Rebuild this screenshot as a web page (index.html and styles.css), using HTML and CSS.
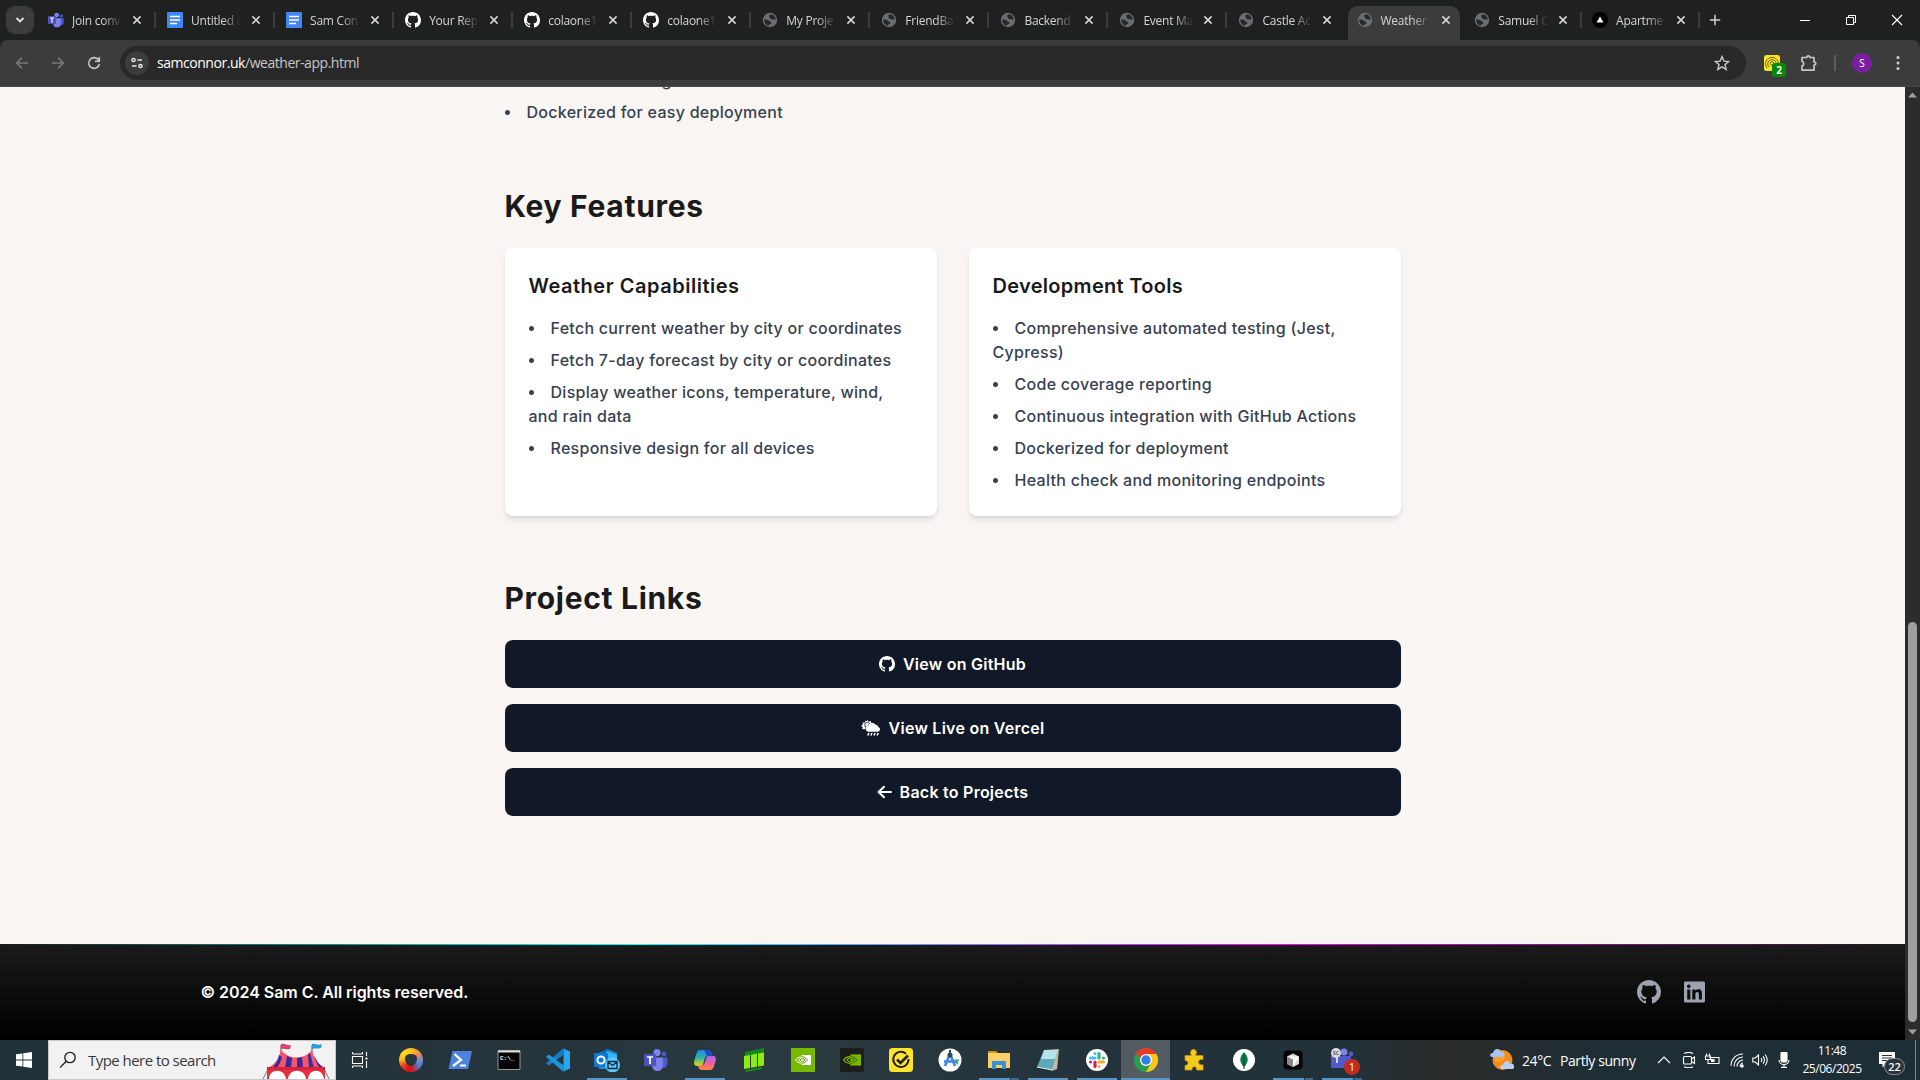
FILE: index.html
```html
<!DOCTYPE html>
<html lang="en">
<head>
<meta charset="utf-8">
<title>Weather App</title>
<link rel="stylesheet" href="styles.css">
</head>
<body>
<svg class="sprite" aria-hidden="true">
  <defs>
    <linearGradient id="ribbon-cool" x1="0" y1="0" x2="0" y2="1"><stop offset="0" stop-color="#1e86e8"/><stop offset=".5" stop-color="#2fb5a8"/><stop offset=".8" stop-color="#a5cf3c"/><stop offset="1" stop-color="#f3c01d"/></linearGradient>
    <linearGradient id="ribbon-warm" x1="0" y1="0" x2="0" y2="1"><stop offset="0" stop-color="#a86af0"/><stop offset=".5" stop-color="#e85fa5"/><stop offset="1" stop-color="#fa8a3c"/></linearGradient>
  </defs>
  <symbol id="github" viewBox="0 0 16 16"><path fill="currentColor" d="M8 0C3.58 0 0 3.58 0 8c0 3.54 2.29 6.53 5.47 7.59.4.07.55-.17.55-.38 0-.19-.01-.82-.01-1.49-2.01.37-2.53-.49-2.69-.94-.09-.23-.48-.94-.82-1.13-.28-.15-.68-.52-.01-.53.63-.01 1.08.58 1.23.82.72 1.21 1.87.87 2.33.66.07-.52.28-.87.51-1.07-1.78-.2-3.64-.89-3.64-3.95 0-.87.31-1.59.82-2.15-.08-.2-.36-1.02.08-2.12 0 0 .67-.21 2.2.82.64-.18 1.32-.27 2-.27s1.36.09 2 .27c1.53-1.04 2.2-.82 2.2-.82.44 1.1.16 1.92.08 2.12.51.56.82 1.27.82 2.15 0 3.07-1.87 3.75-3.65 3.95.29.25.54.73.54 1.48 0 1.07-.01 1.93-.01 2.2 0 .21.15.46.55.38A8.01 8.01 0 0016 8c0-4.42-3.58-8-8-8z"/></symbol>
  <symbol id="docs" viewBox="0 0 16 16"><rect width="16" height="16" rx="1" fill="#4285f4"/><path d="M3 4.500h10M3 8h10M3 11.500h7" stroke="#fff" stroke-width="1.600"/></symbol>
  <symbol id="globe" viewBox="0 0 16 16"><circle cx="8" cy="8" r="7.200" fill="#6a6e73"/><path d="M2.200 7.400c2.600 0 4.200.3 5 1.600.6 1.100 1.800.4 2.200 1.400.4 1-.6 1.600-1.500 1.900-.9.3-.6 1.700-1.500 1.400C3.900 13 2 10.600 2.200 7.400zM9.600 2.300c-.9.500-2.500.6-2.500 1.600 0 .9 1 .8.8 1.800-.2 1 1.200 1.700 2.400 1.500 1.200-.2 1.900.800 3.400.3-.2-2.500-1.700-4.500-4.100-5.200z" fill="#26292b"/></symbol>
  <symbol id="close" viewBox="0 0 10 10"><path d="M1.400 1.400l7.200 7.200M8.600 1.400L1.400 8.600" stroke="#d8d8d8" stroke-width="1.500" fill="none"/></symbol>
  <symbol id="teams" viewBox="0 0 24 24"><circle cx="13" cy="4.600" r="3.600" fill="#7b83eb"/><circle cx="20" cy="6" r="2.400" fill="#5059c9"/><path d="M16 9.500h7.400v6.200a4 4 0 0 1-4 4H16z" fill="#5059c9"/><path d="M8 9.500h11v8a5.500 5.500 0 0 1-11 0z" fill="#7b83eb"/><rect y="6" width="12" height="12" rx="1.200" fill="#4b53bc"/><path d="M3 9h6M6 9v7" stroke="#fff" stroke-width="1.700"/></symbol>
  <symbol id="nvidia" viewBox="0 0 16 10"><path d="M6.500 0H16v10H6.500z" fill="currentColor"/><path d="M.5 5C3 1.500 8.500.6 12.500 4.800 9 9.500 3.500 9 .5 5zM3.500 5c1.700-2.400 5-2.400 7 0-2 2.500-5.300 2.400-7 0z" fill="none" stroke="currentColor"/><path d="M6.500 1.600c2.400.1 4.500 1.400 6 3.200-1.600 2.200-3.600 3.400-6 3.400M6.500 3.500c1.600 0 2.800.6 3.600 1.400-1 1.300-2 1.700-3.600 1.700" class="nv-cut" fill="none" stroke-width=".9"/></symbol>
</svg>

<header class="browser">
  <div class="tabstrip">
    <button class="tab-search"><svg viewBox="0 0 10 10" width="10" height="10"><path d="M1.500 3L5 6.500 8.500 3" fill="none" stroke="#e3e3e3" stroke-width="1.800"/></svg></button>
    <nav class="tabs">
      <div class="tab"><svg class="fav"><use href="#teams"/></svg><span class="title">Join conv</span><svg class="x"><use href="#close"/></svg></div>
      <div class="tab"><svg class="fav"><use href="#docs"/></svg><span class="title">Untitled d</span><svg class="x"><use href="#close"/></svg></div>
      <div class="tab"><svg class="fav"><use href="#docs"/></svg><span class="title">Sam Con</span><svg class="x"><use href="#close"/></svg></div>
      <div class="tab"><svg class="fav"><use href="#github"/></svg><span class="title">Your Rep</span><svg class="x"><use href="#close"/></svg></div>
      <div class="tab"><svg class="fav"><use href="#github"/></svg><span class="title">colaone1</span><svg class="x"><use href="#close"/></svg></div>
      <div class="tab"><svg class="fav"><use href="#github"/></svg><span class="title">colaone1</span><svg class="x"><use href="#close"/></svg></div>
      <div class="tab"><svg class="fav"><use href="#globe"/></svg><span class="title">My Proje</span><svg class="x"><use href="#close"/></svg></div>
      <div class="tab"><svg class="fav"><use href="#globe"/></svg><span class="title">FriendBa</span><svg class="x"><use href="#close"/></svg></div>
      <div class="tab"><svg class="fav"><use href="#globe"/></svg><span class="title">Backend</span><svg class="x"><use href="#close"/></svg></div>
      <div class="tab"><svg class="fav"><use href="#globe"/></svg><span class="title">Event Ma</span><svg class="x"><use href="#close"/></svg></div>
      <div class="tab before-active"><svg class="fav"><use href="#globe"/></svg><span class="title">Castle Ac</span><svg class="x"><use href="#close"/></svg></div>
      <div class="tab narrow active"><svg class="fav"><use href="#globe"/></svg><span class="title">Weather</span><svg class="x"><use href="#close"/></svg></div>
      <div class="tab narrow"><svg class="fav"><use href="#globe"/></svg><span class="title">Samuel C</span><svg class="x"><use href="#close"/></svg></div>
      <div class="tab narrow"><svg class="fav" viewBox="0 0 16 16"><circle cx="8" cy="8" r="8" fill="#000"/><path d="M8 4.500l3.500 6h-7z" fill="#fff"/></svg><span class="title">Apartme</span><svg class="x"><use href="#close"/></svg></div>
    </nav>
    <svg class="new-tab" viewBox="0 0 12 12"><path d="M6 .8v10.400M.8 6h10.400" stroke="#d0d0d0" stroke-width="1.500"/></svg>
    <div class="window-buttons">
      <svg viewBox="0 0 12 12"><path d="M1 6.500h10" stroke="#fff"/></svg>
      <svg viewBox="0 0 12 12"><path d="M1.500 3.500h7v7h-7zM3.500 3.500v-2h7v7h-2" fill="none" stroke="#fff"/></svg>
      <svg viewBox="0 0 12 12"><path d="M1 1l10 10M11 1L1 11" stroke="#fff" stroke-width="1.200"/></svg>
    </div>
  </div>
  <div class="toolbar">
    <div class="nav-buttons">
      <svg viewBox="0 0 16 16" class="dim"><path d="M14 8H3M8 2.600L2.600 8 8 13.400"/></svg>
      <svg viewBox="0 0 16 16" class="dim"><path d="M2 8h11M8 2.600L13.400 8 8 13.400"/></svg>
      <svg viewBox="0 0 16 16"><path d="M12.600 5A5.400 5.400 0 1 0 13.400 9M13.300 2v4.200H9"/></svg>
    </div>
    <div class="omnibox">
      <span class="site-info"><svg viewBox="0 0 14 14"><circle cx="3.500" cy="4" r="1.600"/><path d="M7.500 4H12M2 10h4.500"/><circle cx="10.500" cy="10" r="1.600"/></svg></span>
      <span class="url"><b>samconnor.uk</b>/weather-app.html</span>
      <svg class="star" viewBox="0 0 16 16"><path d="M8 1.600l1.900 4.500 4.800.4-3.700 3.100 1.200 4.800L8 11.800l-4.200 2.600L5 9.600 1.300 6.500l4.800-.4z" fill="none" stroke="#c7c7c7" stroke-width="1.400"/></svg>
    </div>
    <div class="extensions">
      <div class="ext-norton"><svg viewBox="0 0 16 16"><rect width="16" height="16" rx="2.500" fill="#fce51e"/><g fill="none" stroke="#6b6414"><path d="M3 13a6.500 6.500 0 1 1 10 0M5 12a4.300 4.300 0 1 1 6 0"/><circle cx="8" cy="8.500" r="1.800"/></g></svg><span>2</span></div>
      <svg class="puzzle" viewBox="0 0 18 18"><path d="M2 3.500h4.800c0-2.300 3-2.300 3 0H14V8c2.300 0 2.300 3.200 0 3.200v4.900H2v-4.300c2.300-.3 2.300-4 0-4.300z" fill="none" stroke="#c7c7c7" stroke-width="1.700" stroke-linejoin="round"/></svg>
      <i class="rule"></i>
      <span class="avatar">S</span>
      <svg class="kebab" viewBox="0 0 4 16"><g fill="#d0d0d0"><circle cx="2" cy="2.500" r="1.500"/><circle cx="2" cy="8" r="1.500"/><circle cx="2" cy="13.500" r="1.500"/></g></svg>
    </div>
  </div>
</header>

<div class="viewport">
  <div class="page">
    <main class="content">
      <ul class="list intro">
        <li>Automated testing</li>
        <li>Dockerized for easy deployment</li>
      </ul>
      <section>
        <h2>Key Features</h2>
        <div class="cards">
          <article class="card">
            <h3>Weather Capabilities</h3>
            <ul class="list">
              <li>Fetch current weather by city or coordinates</li>
              <li>Fetch 7-day forecast by city or coordinates</li>
              <li>Display weather icons, temperature, wind,<br>and rain data</li>
              <li>Responsive design for all devices</li>
            </ul>
          </article>
          <article class="card tools">
            <h3>Development Tools</h3>
            <ul class="list">
              <li>Comprehensive automated testing (Jest,<br>Cypress)</li>
              <li>Code coverage reporting</li>
              <li>Continuous integration with GitHub Actions</li>
              <li>Dockerized for deployment</li>
              <li>Health check and monitoring endpoints</li>
            </ul>
          </article>
        </div>
      </section>
      <section>
        <h2>Project Links</h2>
        <div class="links">
          <a class="button"><svg width="16" height="16"><use href="#github"/></svg><span>View on GitHub</span></a>
          <a class="button"><svg width="20" height="16" viewBox="0 0 20 16"><path d="M6.400 0l1.300 1.700L9.900 1l.1 2.300c-1.500.2-2.600 1-3.200 2.300A3.300 3.300 0 0 0 4.300 10l-.9-.9-2.200.2.500-2.200L0 5.800l1.900-1.200L1.500 2.400l2.200.3L4.600.6l1.100 1z" fill="#fff"/><circle cx="6.300" cy="5" r="2.600" fill="none" stroke="#111827" stroke-width=".8"/><path d="M7.500 11.800a3.200 3.200 0 0 1-.4-6.300 4 4 0 0 1 7.200-1 3.200 3.200 0 0 1 3.100 2.500 2.500 2.500 0 0 1-.4 4.800z" fill="#fff"/><path d="M7.900 13l-1.100 2.500M11 13l-1.100 2.500M14.100 13L13 15.500M17.200 13l-1.100 2.500" stroke="#fff" stroke-width="1.500"/></svg><span>View Live on Vercel</span></a>
          <a class="button"><svg width="15" height="16" viewBox="0 0 15 16"><path d="M14 8H1.800M7 2.700L1.600 8 7 13.300" fill="none" stroke="#fff" stroke-width="2" stroke-linecap="round" stroke-linejoin="round"/></svg><span>Back to Projects</span></a>
        </div>
      </section>
    </main>
    <footer class="footer">
      <div class="footer-inner">
        <p>© 2024 Sam C. All rights reserved.</p>
        <div class="social">
          <svg width="24" height="24"><use href="#github"/></svg>
          <svg width="21" height="24" viewBox="0 0 448 512"><path fill="currentColor" d="M416 32H31.900C14.300 32 0 46.500 0 64.300v383.400C0 465.500 14.300 480 31.900 480H416c17.600 0 32-14.500 32-32.300V64.300c0-17.800-14.400-32.300-32-32.300zM135.400 416H69V202.200h66.500V416zm-33.200-243c-21.300 0-38.500-17.300-38.500-38.500S80.900 96 102.200 96c21.200 0 38.500 17.300 38.500 38.500 0 21.300-17.200 38.500-38.500 38.500zm282.100 243h-66.400V312c0-24.800-.5-56.700-34.500-56.700-34.600 0-39.900 27-39.900 54.900V416h-66.400V202.200h63.700v29.200h.9c8.900-16.800 30.600-34.500 62.200-34.500 66.500 0 78.800 43.800 78.800 100.900V416z"/></svg>
        </div>
      </div>
    </footer>
  </div>
  <div class="scrollbar">
    <svg viewBox="0 0 15 16"><path d="M7.500 5.500l4.500 5H3z" fill="#9f9f9f"/></svg>
    <i class="thumb"></i>
    <svg viewBox="0 0 15 16"><path d="M7.500 10.500l4.500-5H3z" fill="#9f9f9f"/></svg>
  </div>
</div>

<div class="taskbar">
  <div class="start"><svg viewBox="0 0 16 16" width="16" height="16"><path d="M0 2.300l6.500-.9v6.200H0zM7.300 1.300L16 0v7.600H7.300zM0 8.400h6.500v6.200L0 13.700zM7.300 8.400H16V16l-8.700-1.300z" fill="#fff"/></svg></div>
  <div class="search">
    <svg class="lens" viewBox="0 0 18 18"><circle cx="11" cy="6.500" r="5.200"/><path d="M7.300 10.300L1 16.600"/></svg>
    <span>Type here to search</span>
    <svg class="tent" viewBox="0 0 68 36">
      <path d="M7 24L1 36M61 24l6 12" stroke="#777" fill="none"/>
      <path d="M19 2v10M50 2v10" stroke="#a33"/>
      <path d="M19 1c4-1 6 2 10 1l-1 4c-4 1-6-1-9 0z" fill="#e0406c"/><path d="M50 1c4-1 6 2 10 0l-1 4c-4 1-6 0-9 1z" fill="#2c9bd4"/>
      <path d="M19 7c-2 9-6 14-13 18h57c-7-4-11-9-13-18-8 10-23 10-31 0z" fill="#f0566c"/>
      <path d="M17 12c-1 6-4 10-7 13h5c2-3 4-7 5-11zM25 13l-2 12h6l1-10zM35 15v10h6l-1-11zM46 12l1 13h5l-4-15zM52 13l5 12h5c-5-3-7-7-9-11z" fill="#3c2a9c"/>
      <path d="M5 24h58v5H5z" fill="#d92338"/><path d="M5 27h58v9H5z" fill="#e92e43"/>
      <path d="M7 36c0-11 16-11 17 0zM26 36c1-11 17-11 18 0zM46 36c1-11 15-11 16 0z" fill="#fff"/>
    </svg>
  </div>
  <div class="task-view"><svg viewBox="0 0 18 16" width="18" height="16"><path d="M1.500 4.500h10v7h-10zM1.500 0v2M11.500 0v2M1.500 14V16M11.500 14V16M1.500 2h10M1.500 14h10M15.500 0v4M15.500 9v7" fill="none" stroke="#fff" stroke-width="1.100"/><path d="M14.500 5.500h2v2h-2z" fill="#fff"/></svg></div>
  <div class="apps">
    <div class="app"><span class="ring"><i></i></span></div>
    <div class="app"><svg viewBox="0 0 24 24"><path d="M4.500 3H24l-4 18H.5z" fill="#4b83df"/><path d="M6.500 6l6.500 6-8 6M12 17.500h6" fill="none" stroke="#fff" stroke-width="2.200"/></svg></div>
    <div class="app"><svg viewBox="0 0 24 24"><path d="M1 2.500h22v19H1z" fill="#050505" stroke="#999"/><path d="M1 2.500h22v2H1z" fill="#ddd"/><text x="3" y="11.500" class="glyph-cmd">C:\_</text></svg></div>
    <div class="app"><svg viewBox="0 0 24 24"><path d="M17.500.5L24 3.500v17l-6.500 3z" fill="#28a8ef"/><path d="M17.500 0v6.700L3 17.500.3 15.800v-.9z" fill="#167dc2"/><path d="M17.500 24v-6.700L3 6.500.3 8.200v.9z" fill="#1f94da"/></svg></div>
    <div class="app running"><svg class="wide" viewBox="0 0 26 24"><path d="M5 5l8-4 10 4v16H5z" fill="#1490df"/><path d="M5 5l8-4 5 9-9 5z" fill="#0a62b8"/><path d="M12 3l11 4v8H12z" fill="#35b8f1"/><rect y="5" width="14" height="14" rx="1" fill="#0f78d4"/><circle cx="7" cy="12" r="3.600" fill="none" stroke="#fff" stroke-width="2"/><circle cx="18.500" cy="17" r="7.500" fill="#5cc9fa"/><path d="M14 13.500h9v7h-9zM14 14l4.500 3.500L23 14" fill="none" stroke="#08283c" stroke-width="1.300"/></svg></div>
    <div class="app"><svg viewBox="0 0 24 24"><use href="#teams"/></svg></div>
    <div class="app running"><svg viewBox="0 0 24 24"><path d="M7 2h8.500c2.500 0 3 3 4 6H15c-2.500 0-3 1.500-3.700 4L10 16.500C9.500 18 8.500 18 7 18H4.500C1 18 .5 15.500 1.500 12l2-6.500C4.200 3.200 5 2 7 2z" fill="url(#ribbon-cool)"/><path d="M11 2h4.500c2.500 0 3 3 4 6H15c-1.500 0-2.200-1.500-2.600-3C12 3.500 12 2.500 11 2z" fill="#1f48c4"/><path d="M17 22H9c-2.500 0-3.400-2-4.300-4.500h3.500c2 0 3-1 3.700-3.500l1.500-4.500C14 8.200 14.700 8 16 8h3.500c3 0 4 2 3.200 5l-1.800 5.500C20 21 19 22 17 22z" fill="url(#ribbon-warm)"/></svg></div>
    <div class="app"><svg viewBox="0 0 24 24"><path d="M3 4l19-4v5L3 9z" fill="#138a17"/><path d="M2 8l6-1v13l-6 1zM9 6.700l6-1v13l-6 1zM16 5.500l6-1v13l-6 1z" fill="#8cec12"/><path d="M3 22l17-3v2L4 24z" fill="#138a17"/></svg></div>
    <div class="app nv-green"><svg viewBox="0 0 24 24"><path d="M0 0h24v24H0z" fill="#76b900"/><use href="#nvidia" x="4" y="7" width="16" height="10"/></svg></div>
    <div class="app nv-dark"><svg viewBox="0 0 24 24"><path d="M0 0h24v24H0z" fill="#1d1d1b"/><use href="#nvidia" x="3" y="6" width="18" height="12"/></svg></div>
    <div class="app"><svg viewBox="0 0 24 24"><rect width="24" height="24" rx="3.500" fill="#fee52b"/><path d="M17 5.700A7.600 7.600 0 1 0 19.500 11" fill="none" stroke="#222" stroke-width="2"/><path d="M8 11.500l3.500 3.500L19 7.500" fill="none" stroke="#222" stroke-width="2.600"/></svg></div>
    <div class="app"><svg viewBox="0 0 24 24"><circle cx="12" cy="12" r="11.500" fill="#fff"/><path d="M15 12l6-1-1.500 6z" fill="#38b46b"/><path d="M11.500 7L7 18M12.500 7L17 18M6 13.500h12" fill="none" stroke="#4385ee" stroke-width="2.600"/><circle cx="12" cy="7" r="2.500" fill="#274968"/><path d="M12 2v4" stroke="#274968" stroke-width="2"/></svg></div>
    <div class="app running multi"><svg viewBox="0 0 24 24"><path d="M1 3h8l2 2H1z" fill="#d99408"/><path d="M1 5h22v15H1z" fill="#fbd067"/><path d="M5 21v-8h14v8h-4v-4H9v4z" fill="#3491dd"/></svg></div>
    <div class="app running"><svg viewBox="0 0 24 24"><path d="M8 2l15-1-2 20-5 2z" fill="#c7b9a0"/><path d="M8 2h14l-6 20L1 19z" fill="#5ea9b6"/><path d="M8 2h14l-3 9L5 11z" fill="#b4e3e8"/><path d="M1 19l15 3" stroke="#e8f4f4"/></svg></div>
    <div class="app running"><svg viewBox="0 0 24 24"><circle cx="12" cy="12" r="11" fill="#fff"/><g fill="none" stroke-width="3.200" stroke-linecap="round"><path d="M10 5.500v0M5.500 10H10" stroke="#36c5f0"/><path d="M14 5.500V10M18.500 10v0" stroke="#2eb67d"/><path d="M14 14h4.500M14 18.500v0" stroke="#ecb22e"/><path d="M10 18.500V14M5.500 14v0" stroke="#e01e5a"/></g></svg></div>
    <div class="app running current"><svg viewBox="0 0 24 24"><circle cx="12" cy="12" r="12" fill="#2b9e4a"/><path d="M12 12L1.600 6A12 12 0 0 1 22.400 6z" fill="#e8392b"/><path d="M12 6h10.400A12 12 0 0 1 12 24l5.200-9z" fill="#fdc616"/><circle cx="12" cy="12" r="6" fill="#fff"/><circle cx="12" cy="12" r="4.700" fill="#2f7de9"/></svg></div>
    <div class="app"><svg viewBox="0 0 24 24"><path d="M2 7.500h6.500C6.500 4 8 1.500 10.500 1.500s4 2.500 2 6H20v4.200c-6-2-6 6.500 0 5V22h-6.500c.8-4.500-5-4.500-4.500 0H2v-4.500c4 0 4-5 0-5z" fill="#f5ca1e" stroke="#c99708" stroke-width=".8"/></svg></div>
    <div class="app"><svg viewBox="0 0 24 24"><circle cx="12" cy="12" r="11" fill="#fff"/><path d="M12 4c5 5 5 10 0 15-5-5-5-10 0-15z" fill="#0c7c50"/><path d="M12 7v14" stroke="#06412b"/></svg></div>
    <div class="app running multi"><svg viewBox="0 0 24 24"><rect x="2.500" y="2.500" width="19" height="19" rx="4" fill="#050505"/><path d="M12 5.500l6 3v7.500l-6 3-6-3V8.500z" fill="#d8d8d8"/><path d="M6 8.500h12L12 19v-7.500z" fill="#fff"/><path d="M6 8.500l6 3V19l-6-3z" fill="#8a8a8a"/></svg></div>
    <div class="app running multi"><svg class="wide" viewBox="0 0 26 24"><path d="M2 8h20v12H2z" fill="#5059c9"/><circle cx="15" cy="4" r="3.500" fill="#7b83eb"/><circle cx="22" cy="6" r="2.400" fill="#5059c9"/><circle cx="7" cy="5" r="5" fill="#dcd9e6"/><text x="7" y="7" text-anchor="middle" class="glyph-sc">SC</text><path d="M8 9v6" stroke="#dcd9e6" stroke-width="2"/></svg><span class="count">1</span></div>
  </div>
  <div class="tray">
    <svg class="sun" viewBox="0 0 24 24"><circle cx="12.500" cy="12" r="10" fill="#f58a1c"/><circle cx="9" cy="8" r="6" fill="#ffae35" opacity=".6"/><path d="M2 9c-3-1-2-4.500 1-4 1-5 7-5 8-1 4-1 4 4 2 5z" fill="#a7c5f2"/><path d="M12 21c-3-1-2-4.500 1-4 1-5 7-5 7-1 5-1 5 4 3 5z" fill="#b8d0f5"/></svg>
    <span class="temp">24°C</span><span class="sky">Partly sunny</span>
    <div class="tray-icons">
      <svg viewBox="0 0 16 16"><path d="M2 11l6-6 6 6"/></svg>
      <svg viewBox="0 0 16 16"><rect x="3.500" y="4.500" width="8" height="7.500" rx="1"/><path d="M11.500 7l3-2v6.500l-3-2M4 1.500Q9-.5 13 1.500M4 14.700Q9 16.700 13 14.700"/></svg>
      <svg viewBox="0 0 16 16"><path d="M5 5.500h10v6H5M2.500 1.500V4M5.500 1.500V4M1.500 4h5v3.500h-5zM4 7.500v4h2"/><path d="M7.500 7.500h2.500v2H7.500z" fill="#fff"/></svg>
      <svg viewBox="0 0 16 16"><path d="M3 14C3 7 8 2 15 2M6 14.500c0-5.500 4-9.500 9-9.500M9 14.500c0-3.500 3-6.500 6-6.500M12 14.500c0-2 1.500-3.500 3-3.500"/><circle cx="14" cy="14" r="1.200" fill="#fff"/></svg>
      <svg viewBox="0 0 16 16"><path d="M.8 6v4h2.500L6.500 13V3L3.300 6zM9 6q1.500 2 0 4M11 4.300q3 3.700 0 7.400M13 2.500q4.500 5.500 0 11"/></svg>
      <svg viewBox="0 0 16 16"><rect x="5" y="0" width="6" height="10" rx="1.500" fill="#fff"/><path d="M3 8c0 6 10 6 10 0M8 12.500v3M5 15.400h6"/></svg>
    </div>
    <div class="clock"><span>11:48</span><span>25/06/2025</span></div>
    <div class="notify"><svg viewBox="0 0 16 16"><path d="M0 0h16v12H7l-3.500 3.500V12H0z" fill="#fff"/><path d="M3 3.500h10M3 6h10M3 8.500h7" stroke="#25323a"/></svg><span>22</span></div>
    <i class="peek"></i>
  </div>
</div>
</body>
</html>
```
FILE: styles.css
```css
* { box-sizing: border-box; }
body { margin: 0; width: 1920px; height: 1080px; overflow: hidden; display: flex; flex-direction: column; font-family: "Open Sans", "Noto Sans", sans-serif; }
svg { display: block; flex: none; }
.sprite { position: absolute; width: 0; height: 0; }
h2, h3, p, ul { margin: 0; padding: 0; }

/* Browser chrome */
.browser { height: 87px; flex: none; background: #1f2120; color: #d5d5d5; }
.tabstrip { height: 40px; display: flex; align-items: center; }
.tab-search { width: 28px; height: 28px; margin: 0 2px 0 6px; border: 0; border-radius: 9px; background: #3c3c3c; display: flex; align-items: center; justify-content: center; padding: 0; }
.tabs { display: flex; height: 40px; }
.tab { position: relative; width: 119.05px; display: flex; align-items: center; padding-left: 12px; }
.tab.narrow { width: 117.8px; padding-left: 11px; }
.fav { width: 16px; height: 16px; margin-right: 8px; color: #fff; z-index: 1; }
.title { width: 50px; overflow: hidden; white-space: nowrap; font-size: 12px; letter-spacing: -.25px; line-height: 18px; margin-top: 1px; z-index: 1; -webkit-mask-image: linear-gradient(90deg, #000 62%, transparent 100%); mask-image: linear-gradient(90deg, #000 62%, transparent 100%); }
.x { width: 10px; height: 10px; margin-left: 10px; z-index: 1; }
.tab::after { content: ""; position: absolute; right: -1px; top: 12px; width: 2px; height: 16px; background: #3c3c3c; }
.tab.before-active::after, .tab.active::after { display: none; }
.tab.active::before { content: ""; position: absolute; left: 2px; width: 112px; top: 6px; bottom: 0; border-radius: 10px 10px 0 0; background: #3c3c3c; }
.glyph-cmd { font: 700 6px "Liberation Mono", monospace; fill: #fff; }
.glyph-sc { font: 700 5px "Open Sans", sans-serif; fill: #555; }
.new-tab { width: 12px; height: 12px; margin-left: 10px; }
.window-buttons { display: flex; gap: 34px; margin-left: auto; margin-right: 17px; }
.window-buttons svg { width: 12px; height: 12px; }
.toolbar { height: 47px; background: #3c3c3c; border-bottom: 1px solid #4a4a4a; border-radius: 8px 8px 0 0; display: flex; align-items: center; }
.nav-buttons { display: flex; gap: 20px; padding-left: 14px; width: 120px; }
.nav-buttons svg { width: 16px; height: 16px; fill: none; stroke: #c7c7c7; stroke-width: 1.6; }
.nav-buttons .dim { stroke: #7a7a7a; }
.omnibox { width: 1626px; height: 34px; border-radius: 17px; background: #282828; display: flex; align-items: center; padding: 0 16px 0 5px; }
.site-info { width: 24px; height: 24px; border-radius: 50%; background: #3c3c3c; display: flex; align-items: center; justify-content: center; margin-right: 8px; }
.site-info svg { width: 14px; height: 14px; fill: none; stroke: #e3e3e3; stroke-width: 1.5; }
.url { flex: 1; font-size: 14px; letter-spacing: -.46px; color: #c7c7c7; margin-top: -1px; }
.url b { font-weight: 400; color: #fff; }
.star { width: 16px; height: 16px; }
.extensions { display: flex; align-items: center; padding-left: 18px; }
.ext-norton { position: relative; width: 16px; margin-right: 20px; }
.ext-norton span { position: absolute; left: 8px; top: 8px; width: 14px; height: 14px; border-radius: 3px; background: #058a05; color: #fff; font-size: 10px; font-weight: 700; line-height: 14px; text-align: center; }
.puzzle { width: 18px; height: 18px; margin-right: 16px; }
.rule { width: 2px; height: 16px; background: #5c5c5c; margin-right: 16px; }
.avatar { width: 20px; height: 20px; border-radius: 50%; background: #7b1fa2; color: #fff; font-size: 10px; line-height: 20px; text-align: center; margin-right: 24px; }
.kebab { width: 4px; height: 16px; }

/* Page */
.viewport { height: 953px; display: flex; }
.page { width: 1905px; height: 953px; overflow: hidden; background: #f9f5f2; font-family: Inter, "Open Sans", sans-serif; display: flex; flex-direction: column; }
.content { width: 896px; height: 857px; margin: 0 auto; display: flex; flex-direction: column; gap: 64px; flex: none; }
.list { list-style: none; color: #374151; font-size: 16px; font-weight: 500; letter-spacing: .28px; line-height: 24px; display: flex; flex-direction: column; gap: 8px; }
.list li { white-space: nowrap; }
.list li::before { content: ""; display: inline-block; width: 5px; height: 5px; margin: 0 17px 3px 0; border-radius: 50%; background: #374151; }
.intro { margin-top: -19px; }
h2 { font-size: 30px; line-height: 36px; font-weight: 700; letter-spacing: .68px; color: #1a1a1a; margin-bottom: 24px; }
.cards { display: grid; grid-template-columns: 1fr 1fr; gap: 32px; }
.card { height: 268px; background: #fff; border-radius: 8px; padding: 24px; box-shadow: 0 4px 6px -1px rgba(0,0,0,.1), 0 2px 4px -2px rgba(0,0,0,.1); }
h3 { font-size: 20px; line-height: 28px; font-weight: 600; letter-spacing: .52px; color: #1a1a1a; margin-bottom: 16px; }
.tools h3 { letter-spacing: .3px; }
.links { display: flex; flex-direction: column; gap: 16px; }
.button { height: 48px; border-radius: 8px; background: #111827; color: #fff; font-size: 16px; font-weight: 600; letter-spacing: .25px; display: flex; align-items: center; justify-content: center; gap: 8px; }
.footer { position: relative; height: 96px; flex: none; background: linear-gradient(#1a1a1a, #000); }
.footer::before { content: ""; position: absolute; left: 0; right: 0; top: 0; height: 1px; background: linear-gradient(90deg, transparent, #0ff, #f0f, transparent); }
.footer-inner { width: 1504px; height: 96px; margin: 0 auto; display: flex; align-items: center; justify-content: space-between; color: #fff; font-size: 16px; font-weight: 600; letter-spacing: -.04px; }
.social { display: flex; gap: 23px; color: #9ca3af; }
.scrollbar { width: 15px; background: #2c2c2c; display: flex; flex-direction: column; align-items: center; }
.scrollbar svg { width: 15px; height: 16px; }
.thumb { width: 9px; height: 400px; border-radius: 5px; background: #9f9f9f; margin-top: auto; margin-bottom: 2px; }

/* Taskbar */
.taskbar { height: 40px; display: flex; background: linear-gradient(90deg, #20323a 0, #26353b 30%, #2b3a40 40%, #22313a 62%, #22323a 70%, #2a2b2a 75%, #1f2d34 83%, #1e2e36 100%); color: #fff; }
.start { width: 48px; display: flex; align-items: center; justify-content: center; }
.search { width: 288px; background: #f2f2f2; border: 1px solid #c8c8c8; display: flex; align-items: center; padding: 0 5px 0 10px; font-size: 15px; letter-spacing: -.54px; color: #3a3a3a; }
.lens { width: 18px; height: 18px; margin-right: 11px; fill: none; stroke: #1a1a1a; stroke-width: 1.3; }
.tent { width: 68px; height: 36px; margin-left: auto; align-self: flex-end; }
.task-view { width: 50px; padding-right: 2px; display: flex; align-items: center; justify-content: center; }
.apps { display: flex; }
.app { position: relative; width: 49px; height: 40px; display: flex; align-items: center; justify-content: center; }
.app svg { width: 24px; height: 24px; }
.app svg.wide { width: 26px; }
.ring { width: 24px; height: 24px; border-radius: 50%; display: flex; align-items: center; justify-content: center; background: conic-gradient(#fcc21b, #f08a4a 50deg, #7d86c8 90deg, #4a7fd8 125deg, #b5304a 160deg, #d8100f 190deg, #ea3a1a 230deg, #fbb01c 270deg, #fddc22 310deg, #fcc21b); }
.ring i { width: 12px; height: 12px; background: #29363c; border-radius: 45% 45% 50% 50% / 35% 35% 65% 65%; }
.app.running::after { content: ""; position: absolute; left: 5px; right: 4px; bottom: 0; height: 2px; background: #5a95c8; }
.app.multi::after { background: linear-gradient(90deg, #5a95c8 31px, #26353b 31px, #26353b 32px, #3d6a90 32px); }
.app.current { background: #535c63; }
.app.current::after { left: 0; right: 0; }
.nv-green { color: #fff; }
.nv-dark { color: #76b900; }
.nv-cut { stroke: #4d7a00; }
.count { position: absolute; left: 27px; top: 19px; width: 16px; height: 16px; border-radius: 50%; background: #c42b1c; font-size: 11px; line-height: 16px; text-align: center; }
.tray { flex: 1; display: flex; align-items: center; justify-content: flex-end; }
.sun { width: 24px; height: 24px; margin-right: 8px; }
.temp, .sky { font-size: 14px; letter-spacing: -.42px; white-space: nowrap; }
.temp { width: 38px; }
.sky { width: 96px; }
.tray-icons { display: flex; gap: 8px; margin-right: 10px; }
.tray-icons svg { width: 16px; height: 16px; fill: none; stroke: #fff; stroke-width: 1.1; }
.clock { width: 60px; display: flex; flex-direction: column; align-items: center; font-size: 12px; line-height: 18px; letter-spacing: -.46px; white-space: nowrap; margin-right: 17px; }
.notify { position: relative; width: 16px; margin-right: 20px; }
.notify svg { width: 16px; height: 16px; }
.notify span { position: absolute; left: 5px; top: 6px; width: 21px; height: 17px; border-radius: 9px; border: 1px solid #8b9296; background: #2a3338; font-size: 11px; font-weight: 600; line-height: 15px; text-align: center; }
.peek { width: 1px; height: 40px; background: #7d878c; margin-right: 4px; }
```
